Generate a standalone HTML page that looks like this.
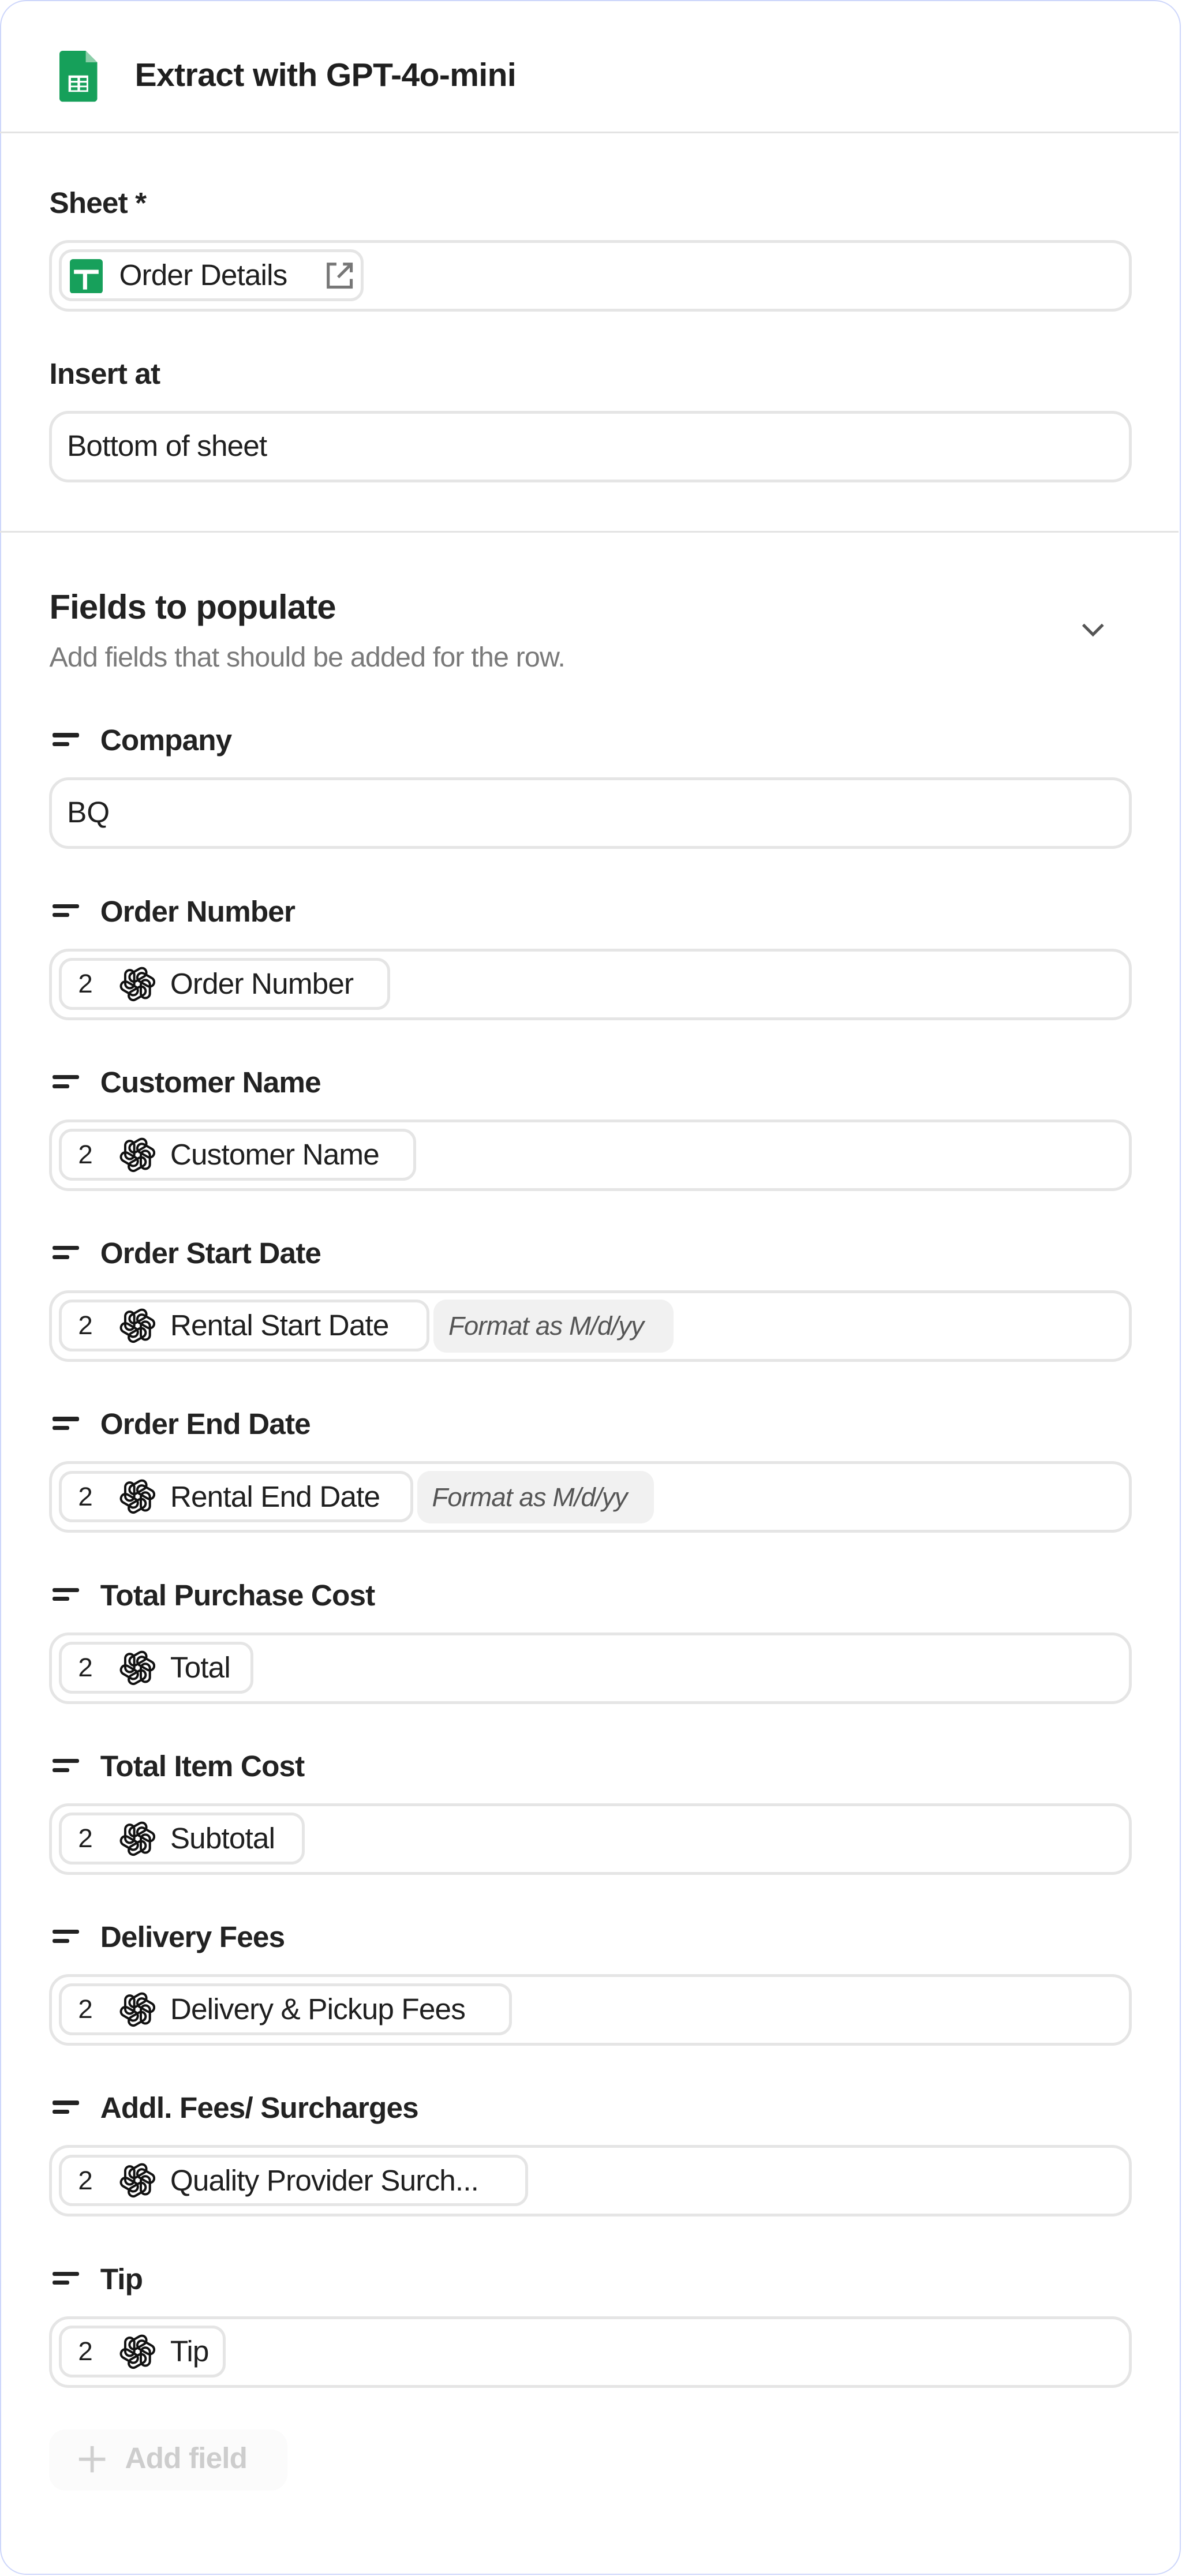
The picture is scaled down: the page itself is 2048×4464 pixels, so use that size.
<!DOCTYPE html>
<html><head><meta charset="utf-8"><style>
html,body{margin:0;padding:0;background:#fff;}
body{width:2048px;height:4464px;overflow:hidden;}
#z{zoom:2.84854;width:719px;height:1567px;position:relative;font-family:"Liberation Sans",sans-serif;color:#1f1f1f;}
.card{position:absolute;left:0;top:0;width:717px;height:1565px;border:1px solid #cdd6fb;border-radius:16px;background:#fff;}
.abs{position:absolute;}
.title{left:82px;top:34px;font-size:20px;font-weight:bold;letter-spacing:-0.2px;}
.hline{left:0;width:717px;height:1px;background:#e3e3e3;}
.lbl{font-size:18px;font-weight:bold;letter-spacing:-0.3px;color:#222;}
.inp{left:30px;width:655px;height:40px;border:2px solid #e5e5e5;border-radius:12px;}
.chip{position:absolute;top:4px;height:28px;border:2px solid #e5e5e5;border-radius:8px;background:#fff;font-size:18px;letter-spacing:-0.3px;line-height:28px;white-space:nowrap;overflow:hidden;}
.chip .n{position:absolute;left:10px;top:0;font-size:16px;}
.chip svg.o{position:absolute;left:35px;top:3px;}
.chip .t{position:absolute;left:66px;top:0;}
.fmt{position:absolute;top:4px;height:32px;border-radius:8px;background:#f1f1f1;font-size:16px;font-style:italic;color:#555;line-height:32px;padding-left:9px;letter-spacing:-0.3px;white-space:nowrap;}
.eq{position:absolute;left:32px;}
.eq i{display:block;height:2.5px;background:#222;border-radius:1px;}
</style></head><body><div id="z">
<div class="card"></div>

<svg class="abs" style="left:36px;top:31px" width="24" height="31" viewBox="0 0 24 31">
<path d="M2 0H16L23 7V29a2 2 0 0 1-2 2H2a2 2 0 0 1-2-2V2a2 2 0 0 1 2-2z" fill="#16a05a"/>
<path d="M16 0V7H23z" fill="#8ccfa9"/>
<rect x="5.5" y="15" width="12" height="10" fill="#fff"/>
<g fill="#16a05a"><rect x="7" y="16.5" width="4" height="1.8"/><rect x="12.5" y="16.5" width="4" height="1.8"/><rect x="7" y="19.4" width="4" height="1.8"/><rect x="12.5" y="19.4" width="4" height="1.8"/><rect x="7" y="22.2" width="4" height="1.8"/><rect x="12.5" y="22.2" width="4" height="1.8"/></g>
</svg>
<div class="abs title">Extract with GPT-4o-mini</div>
<div class="abs hline" style="top:80px"></div>

<div class="abs lbl" style="left:30px;top:113px">Sheet *</div>
<div class="abs inp" style="top:146px">
 <div class="chip" style="left:4px;width:182px">
  <svg class="abs" style="left:5px;top:4px" width="20" height="21" viewBox="0 0 20 21"><rect width="20" height="21" rx="2" fill="#17a05b"/><rect x="2.5" y="6.5" width="15" height="2.5" fill="#fff"/><rect x="8" y="6.5" width="2.5" height="12" fill="#fff"/></svg>
  <span class="abs" style="left:35px;top:0">Order Details</span>
  <svg class="abs" style="left:160px;top:5px" width="18" height="18" viewBox="0 0 18 18" fill="none" stroke="#777" stroke-width="1.8"><path d="M7 2H2v14h14v-5"/><path d="M16 2L8 10M11 2h5v5"/></svg>
 </div>
</div>

<div class="abs lbl" style="left:30px;top:217px">Insert at</div>
<div class="abs inp" style="top:250px"><span class="abs" style="left:9px;top:9px;font-size:18px;letter-spacing:-0.3px">Bottom of sheet</span></div>

<div class="abs hline" style="top:323px"></div>

<div class="abs" style="left:30px;top:357px;font-size:21px;letter-spacing:-0.3px;color:#222;font-weight:bold">Fields to populate</div>
<div class="abs" style="left:30px;top:390px;font-size:17px;letter-spacing:-0.3px;color:#7a7a7a">Add fields that should be added for the row.</div>
<svg class="abs" style="left:657px;top:377px" width="16" height="12" viewBox="0 0 16 12" fill="none" stroke="#555" stroke-width="1.8"><path d="M2 3l6 6 6-6"/></svg>

<svg width="0" height="0" style="position:absolute"><defs>
<g id="oai" fill="none" stroke="#111" stroke-width="1.4">
<rect id="p" x="-7.5" y="-8.5" width="5.5" height="11" rx="2.75"/>
<use href="#p" transform="rotate(60)"/><use href="#p" transform="rotate(120)"/><use href="#p" transform="rotate(180)"/><use href="#p" transform="rotate(240)"/><use href="#p" transform="rotate(300)"/>
</g></defs></svg>

<div id="fields"></div>

<div class="abs" style="left:30px;top:1478px;width:145px;height:37px;border-radius:10px;background:#fbfbfb"></div>
<svg class="abs" style="left:47px;top:1487px" width="18" height="18" viewBox="0 0 18 18" stroke="#cfcfcf" stroke-width="2"><path d="M9 1v16M1 9h16"/></svg>
<div class="abs" style="left:76px;top:1485px;font-size:18px;font-weight:bold;color:#cdcdcd;letter-spacing:-0.3px">Add field</div>

<script>
var F=[["Company",null],["Order Number",["Order Number",198]],["Customer Name",["Customer Name",214]],["Order Start Date",["Rental Start Date",222],146],["Order End Date",["Rental End Date",212],144],["Total Purchase Cost",["Total",115]],["Total Item Cost",["Subtotal",146]],["Delivery Fees",["Delivery &amp; Pickup Fees",272]],["Addl. Fees/ Surcharges",["Quality Provider Surch...",282]],["Tip",["Tip",98]]];
var h="";
function logo(){return '<svg class="o" width="22" height="22" viewBox="-11 -11 22 22"><use href="#oai"/></svg>';}
for(var i=0;i<F.length;i++){var y=440+i*104,f=F[i];
h+='<div class="eq" style="top:'+(y+6)+'px;width:16px"><i style="width:16px"></i><i style="width:10px;margin-top:3px"></i></div>';
h+='<div class="abs lbl" style="left:61px;top:'+y+'px">'+f[0]+'</div>';
h+='<div class="abs inp" style="top:'+(y+33)+'px">';
if(!f[1])h+='<span class="abs" style="left:9px;top:9px;font-size:18px">BQ</span>';
else{h+='<div class="chip" style="left:4px;width:'+f[1][1]+'px"><span class="n">2</span>'+logo()+'<span class="t">'+f[1][0]+'</span></div>';
if(f[2])h+='<div class="fmt" style="left:'+(f[1][1]+10)+'px;width:'+(f[2]-9)+'px">Format as M/d/yy</div>';}
h+='</div>';}
document.getElementById('fields').innerHTML=h;
</script>
</div></body></html>
